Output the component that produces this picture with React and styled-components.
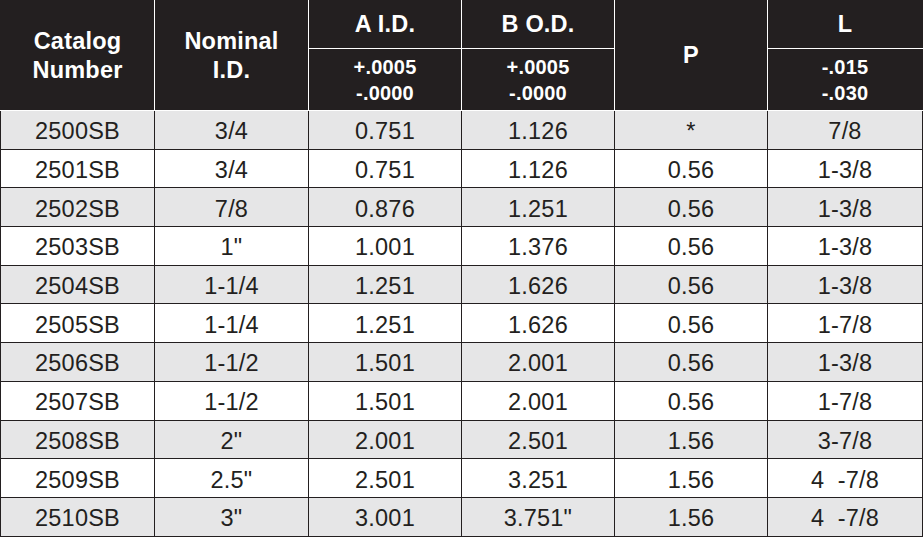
import React from 'react';
import styled, { createGlobalStyle } from 'styled-components';

const GlobalStyle = createGlobalStyle`
  html, body {
    margin: 0;
    padding: 0;
    background: #ffffff;
  }
  body {
    font-family: "Liberation Sans", Arial, sans-serif;
  }
`;

const Table = styled.table`
  width: 922px;
  border-collapse: collapse;
  table-layout: fixed;
  font-family: "Liberation Sans", Arial, sans-serif;
  color: #231f20;
`;

const HeadCell = styled.th`
  background: #231f20;
  color: #ffffff;
  font-weight: 700;
  font-size: ${props => (props.small ? '20px' : '23.5px')};
  line-height: ${props => (props.small ? '26px' : '29px')};
  letter-spacing: 0.2px;
  text-align: center;
  vertical-align: middle;
  padding: 0;
  border: 1px solid #ffffff;
  border-top-color: #231f20;
  height: ${props => props.h || 'auto'};

  &:first-child {
    border-left-color: #231f20;
  }
  &:last-child {
    border-right-color: #231f20;
  }
`;

const Row = styled.tr`
  background: ${props => (props.shaded ? '#e6e6e7' : '#ffffff')};
`;

const Cell = styled.td`
  height: 34.7px;
  padding: 3px 0 0;
  text-align: center;
  vertical-align: middle;
  font-size: 23.5px;
  line-height: 26px;
  letter-spacing: 0.2px;
  border: 1px solid #231f20;
  white-space: pre;
`;

const rows = [
  ['2500SB', '3/4', '0.751', '1.126', '*', '7/8'],
  ['2501SB', '3/4', '0.751', '1.126', '0.56', '1-3/8'],
  ['2502SB', '7/8', '0.876', '1.251', '0.56', '1-3/8'],
  ['2503SB', '1"', '1.001', '1.376', '0.56', '1-3/8'],
  ['2504SB', '1-1/4', '1.251', '1.626', '0.56', '1-3/8'],
  ['2505SB', '1-1/4', '1.251', '1.626', '0.56', '1-7/8'],
  ['2506SB', '1-1/2', '1.501', '2.001', '0.56', '1-3/8'],
  ['2507SB', '1-1/2', '1.501', '2.001', '0.56', '1-7/8'],
  ['2508SB', '2"', '2.001', '2.501', '1.56', '3-7/8'],
  ['2509SB', '2.5"', '2.501', '3.251', '1.56', '4  -7/8'],
  ['2510SB', '3"', '3.001', '3.751"', '1.56', '4  -7/8'],
];

export default function App() {
  return (
    <>
      <GlobalStyle />
      <Table>
        <colgroup>
          <col style={{ width: 154 }} />
          <col style={{ width: 154 }} />
          <col style={{ width: 153 }} />
          <col style={{ width: 153 }} />
          <col style={{ width: 153 }} />
          <col style={{ width: 155 }} />
        </colgroup>
        <thead>
          <tr>
            <HeadCell rowSpan={2}>Catalog<br />Number</HeadCell>
            <HeadCell rowSpan={2}>Nominal<br />I.D.</HeadCell>
            <HeadCell h="47px">A I.D.</HeadCell>
            <HeadCell>B O.D.</HeadCell>
            <HeadCell rowSpan={2}>P</HeadCell>
            <HeadCell>L</HeadCell>
          </tr>
          <tr>
            <HeadCell small h="61px">+.0005<br />-.0000</HeadCell>
            <HeadCell small>+.0005<br />-.0000</HeadCell>
            <HeadCell small>-.015<br />-.030</HeadCell>
          </tr>
        </thead>
        <tbody>
          {rows.map((r, i) => (
            <Row key={r[0]} shaded={i % 2 === 0}>
              {r.map((v, j) => (
                <Cell key={j}>{v}</Cell>
              ))}
            </Row>
          ))}
        </tbody>
      </Table>
    </>
  );
}
